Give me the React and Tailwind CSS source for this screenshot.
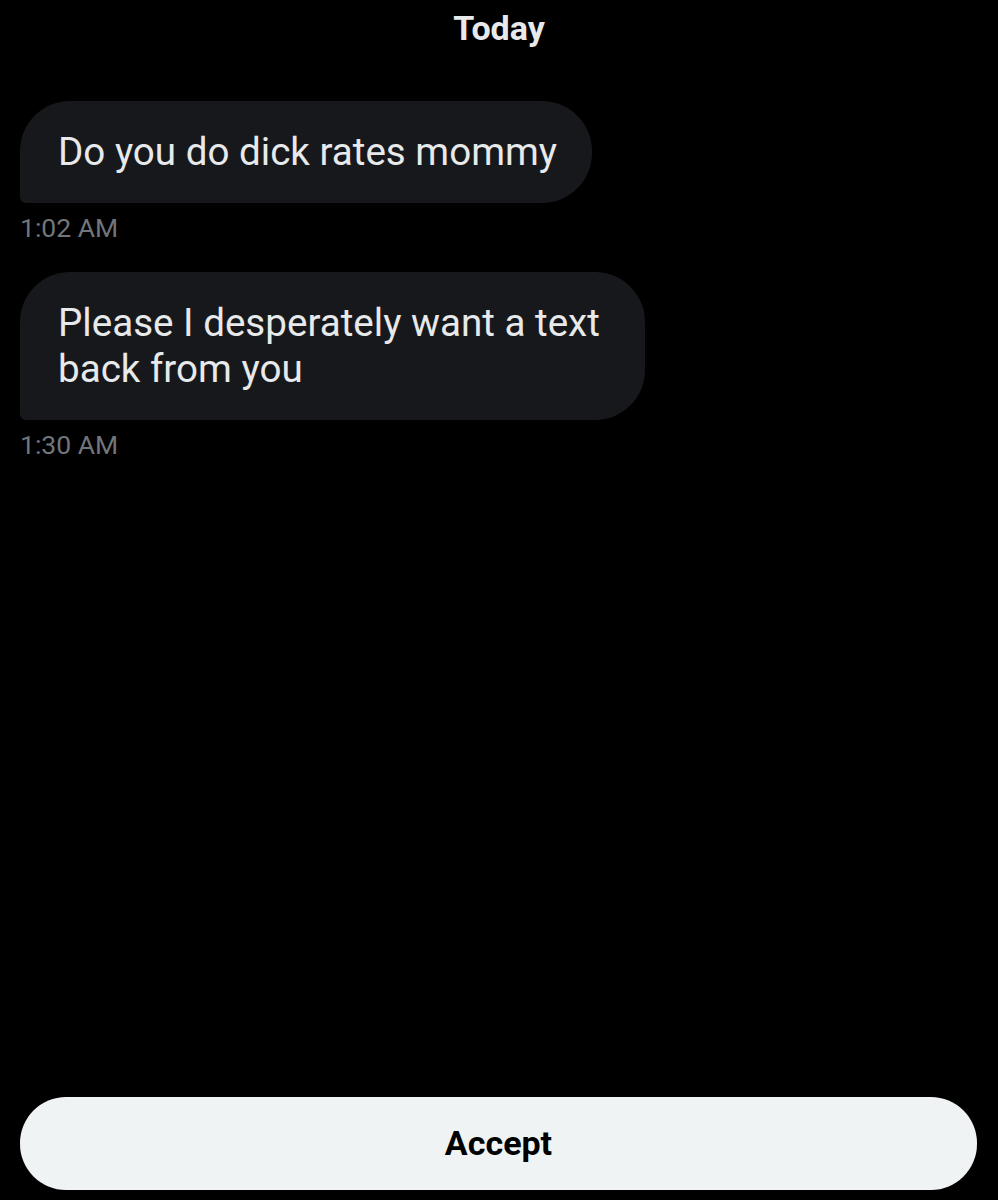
export default function App() {
  const font = { fontFamily: 'Roboto, "Liberation Sans", sans-serif' };
  return (
    <div className="w-[998px] h-[1200px] bg-black flex flex-col" style={font}>
      <div className="pt-[8px] text-center text-[34px] leading-[40px] font-bold text-[#e7e9ea]">Today</div>
      <div className="flex flex-col items-start px-[20px] pt-[53px]">
        <div className="bg-[#17181c] rounded-[50px] rounded-bl-[6px] pl-[38px] pr-[35px] py-[28px] text-[38.6px] leading-[46px] text-[#e7e9ea] whitespace-nowrap">
          Do you do dick rates mommy
        </div>
        <div className="mt-[9px] text-[26.5px] leading-[32px] text-[#71767b]">1:02 AM</div>
        <div className="mt-[28px] bg-[#17181c] rounded-[50px] rounded-bl-[6px] pl-[38px] pr-[45px] py-[28px] text-[38.6px] leading-[46px] text-[#e7e9ea] whitespace-nowrap">
          Please I desperately want a text
          <br />
          back from you
        </div>
        <div className="mt-[9px] text-[26.5px] leading-[32px] text-[#71767b]">1:30 AM</div>
      </div>
      <div className="mt-auto px-[20px] pb-[10px]">
        <button className="w-[957px] h-[93px] rounded-[46px] bg-[#eff3f4] text-black text-[34px] font-bold flex items-center justify-center">
          Accept
        </button>
      </div>
    </div>
  );
}
